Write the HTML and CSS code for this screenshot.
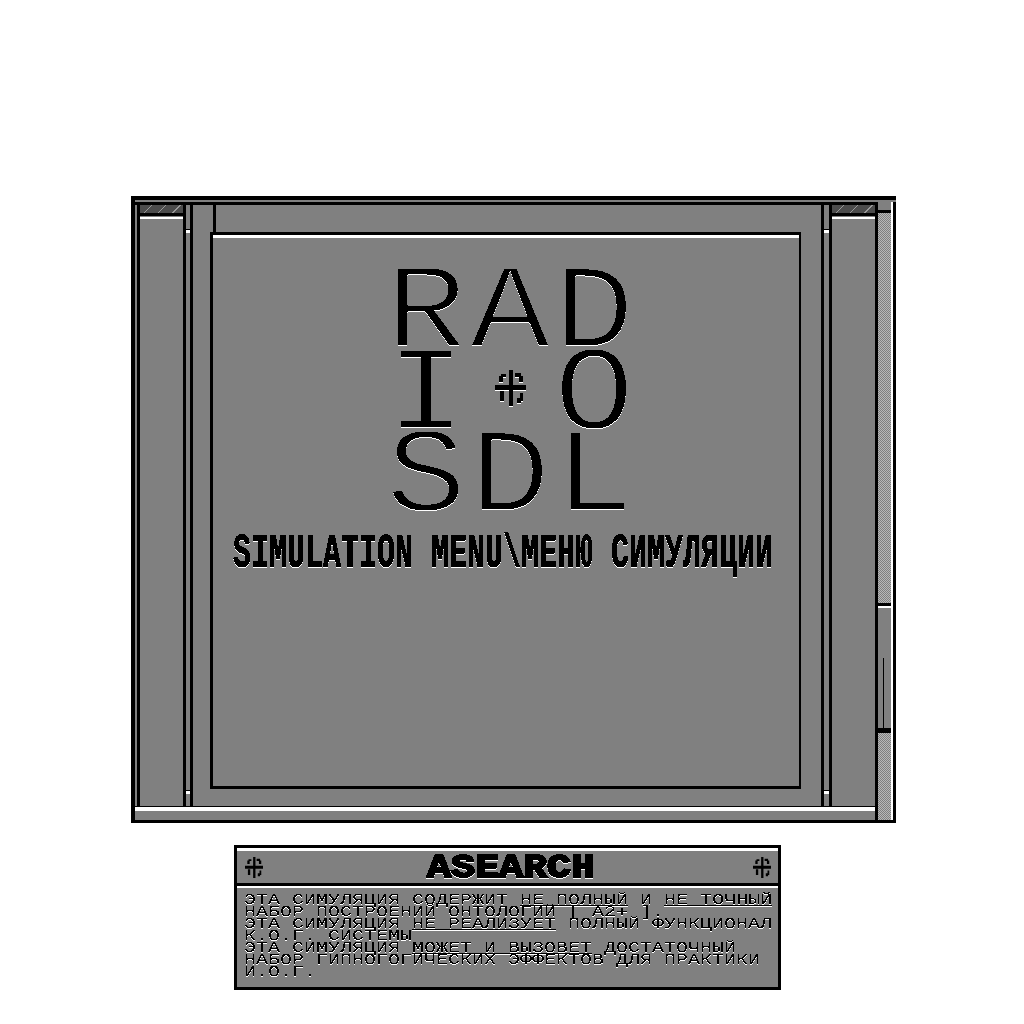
FILE: index.html
```html
<!DOCTYPE html>
<html lang="ru">
<head>
    <meta charset="UTF-8">
    <meta name="viewport" content="width=device-width, initial-scale=1.0">
    <title>Radio SDL</title>
    <link rel="stylesheet" href="styles.css">
</head>
<body>
    <svg class="defs" aria-hidden="true">
        <!-- hard 1-bit edges on text, with the white lip under each stroke -->
        <filter id="crisp" x="0" y="0" width="100%" height="100%" color-interpolation-filters="sRGB">
            <feComponentTransfer in="SourceAlpha" result="hard">
                <feFuncA type="discrete" tableValues="0 1"/>
            </feComponentTransfer>
            <feOffset in="hard" dy="1" result="moved"/>
            <feFlood flood-color="#fff"/>
            <feComposite in2="moved" operator="in" result="light"/>
            <feMerge>
                <feMergeNode in="light"/>
                <feMergeNode in="hard"/>
            </feMerge>
        </filter>
        <!-- same, but the gray text-stroke counts as empty, so letters come out thin -->
        <filter id="crisp-thin" x="0" y="0" width="100%" height="100%" color-interpolation-filters="sRGB">
            <feColorMatrix in="SourceGraphic" type="matrix" values="0 0 0 0 0  0 0 0 0 0  0 0 0 0 0  -2 0 0 1 0" result="dark"/>
            <feComponentTransfer in="dark" result="hard">
                <feFuncA type="discrete" tableValues="0 1"/>
            </feComponentTransfer>
            <feOffset in="hard" dy="1" result="moved"/>
            <feFlood flood-color="#fff"/>
            <feComposite in2="moved" operator="in" result="light"/>
            <feMerge>
                <feMergeNode in="light"/>
                <feMergeNode in="hard"/>
            </feMerge>
        </filter>
        <symbol id="dotcross" viewBox="0 0 31 36">
            <path d="M0 15h31v5H0zM14 0h4v36h-4zM4 6h2V4h5v3H8v5H4zM20 3h6v3h2v6h-4V7h-4zM5 21h4v10H5zM25 23h3v8h-2v2h-4v-5h3z"/>
        </symbol>
    </svg>

    <div class="window">
        <div class="main">
            <div class="columns">
                <div class="side side-left">
                    <div class="hatch"></div>
                    <div class="side-body"></div>
                </div>
                <div class="strip"><i></i><i></i></div>
                <div class="center">
                    <div class="center-top"></div>
                    <div class="panel">
                        <div class="logo">
                            <span>R</span><span>A</span><span>D</span>
                            <span>I</span>
                            <svg class="mark"><use href="#dotcross"/></svg>
                            <span>O</span>
                            <span>S</span><span>D</span><span>L</span>
                        </div>
                        <h1 class="subtitle"><span>SIMULATION MENU\МЕНЮ СИМУЛЯЦИИ</span></h1>
                    </div>
                </div>
                <div class="strip strip-right"><i></i><i></i></div>
                <div class="side side-right">
                    <div class="hatch"></div>
                    <div class="side-body"></div>
                </div>
            </div>
            <div class="bottom-bar"></div>
        </div>
        <div class="scroll">
            <div class="scroll-cap"></div>
            <div class="scroll-track scroll-track-top"></div>
            <div class="scroll-thumb"><i></i></div>
            <div class="scroll-track"></div>
        </div>
    </div>

    <div class="info">
        <div class="info-head">
            <svg class="mark-small"><use href="#dotcross"/></svg>
            <h2 class="info-title"><span>ASEARCH</span></h2>
            <svg class="mark-small"><use href="#dotcross"/></svg>
        </div>
        <div class="info-body">
            <div class="notes">
                <p>ЭТА СИМУЛЯЦИЯ СОДЕРЖИТ <u>НЕ ПОЛНЫЙ</u> И <u>НЕ ТОЧНЫЙ</u></p>
                <p>НАБОР ПОСТРОЕНИЙ ОНТОЛОГИЙ [ A2+ ].</p>
                <p>ЭТА СИМУЛЯЦИЯ <u>НЕ РЕАЛИЗУЕТ</u> ПОЛНЫЙ ФУНКЦИОНАЛ</p>
                <p>К.О.Г. СИСТЕМЫ</p>
                <p>ЭТА СИМУЛЯЦИЯ <u>МОЖЕТ И ВЫЗОВЕТ</u> ДОСТАТОЧНЫЙ</p>
                <p>НАБОР ГИПНОГОГИЧЕСКИХ ЭФФЕКТОВ ДЛЯ ПРАКТИКИ</p>
                <p>И.О.Г.</p>
            </div>
        </div>
    </div>
</body>
</html>
```

FILE: styles.css
```css
*{
    margin: 0;
    padding: 0;
    box-sizing: border-box;
}
body{
    background: #fff;
    padding: 196px 0 0 131px;
    font-family: "Liberation Mono", monospace;
    color: #000;
}
.defs{
    position: absolute;
    width: 0;
    height: 0;
}

/* main window */
.window{
    display: flex;
    width: 765px;
    height: 627px;
    background: #808080;
    border: solid #000;
    border-width: 4px 0 3px 4px;
}
.main{
    flex: 1;
    display: flex;
    flex-direction: column;
    padding-top: 2px;
}
.columns{
    flex: 1;
    display: flex;
    border-top: 3px solid #000;
}
.side{
    display: flex;
    flex-direction: column;
    border-right: 3px solid #000;
}
.side-left{
    width: 49px;
    border-left: 3px solid #000;
    margin-left: 2px;
}
.side-right{
    width: 46px;
    border-left: 3px solid #000;
    border-right: 0;
}
.hatch{
    height: 11px;
    border-bottom: 3px solid #000;
    background: repeating-linear-gradient(135deg, #4c4c4c 0 8px, #999 8px 9px, #4c4c4c 9px 10px);
}
.side-body{
    flex: 1;
    margin-top: 1px;
    border-top: 2px solid #fff;
}
.strip{
    display: flex;
    flex-direction: column;
    justify-content: space-between;
    width: 4px;
    padding: 25px 0 12px;
}
.strip-right{
    width: 5px;
}
.strip i{
    display: block;
    height: 3px;
    background: #fff;
    box-shadow: 0 -1px #000;
}
.center{
    flex: 1;
    display: flex;
    flex-direction: column;
    border-left: 3px solid #000;
    border-right: 3px solid #000;
    padding: 0 20px 0 17px;
}
.center-top{
    height: 27px;
    margin-left: 3px;
    border-left: 3px solid #000;
}
.panel{
    display: flex;
    flex-direction: column;
    align-items: center;
    height: 557px;
    border: solid #000;
    border-width: 3px 2px 3px 3px;
    box-shadow: inset 0 3px #fff;
    padding-top: 39px;
}

/* logo, 3x3 letters */
.logo{
    display: grid;
    grid-template-columns: repeat(3, 84px);
    grid-auto-rows: 82px;
    justify-items: center;
    align-items: center;
    margin-left: 8px;
    font-size: 120px;
    line-height: 82px;
    -webkit-text-stroke: 3px #808080;
    filter: url(#crisp-thin);
}
.logo span{
    transform: scaleX(1.12);
}
.mark{
    width: 31px;
    height: 36px;
    margin-bottom: 18px;
}
.mark-small{
    width: 18px;
    height: 21px;
}
.subtitle{
    width: 540px;
    height: 48px;
    margin-top: 10px;
    margin-right: 6px;
    font-size: 30px;
    font-weight: bold;
    line-height: 30px;
    white-space: nowrap;
    filter: url(#crisp);
}
.subtitle span{
    display: block;
    -webkit-text-stroke: 0.5px #000;
    transform: scaleY(1.6);
    transform-origin: left top;
}
.bottom-bar{
    height: 14px;
    border-top: 1px solid #000;
    box-shadow: inset 0 4px #fff;
}

/* scrollbar */
.scroll{
    display: flex;
    flex-direction: column;
    width: 21px;
    margin-top: 2px;
    border-left: 3px solid #000;
    border-right: 3px solid #000;
    box-shadow: inset -2px 0 #fff;
}
.scroll-cap{
    height: 11px;
    border-bottom: 3px solid #000;
    margin-right: 2px;
}
.scroll-track{
    flex: 1;
    margin-right: 2px;
    background: repeating-conic-gradient(#808080 0 25%, #b8b8b8 0 50%) 0 0 / 2px 2px;
}
.scroll-track-top{
    flex: none;
    height: 390px;
}
.scroll-thumb{
    height: 130px;
    margin-right: 2px;
    border-top: 3px solid #000;
    border-bottom: 5px solid #000;
    box-shadow: inset 0 2px #fff;
}
.scroll-thumb i{
    display: block;
    width: 1px;
    height: 70px;
    margin: 52px 0 0 5px;
    background: #000;
}

/* info box under the window */
.info{
    width: 547px;
    height: 145px;
    margin: 22px 0 0 103px;
    background: #808080;
    border: 3px solid #000;
}
.info-head{
    display: flex;
    align-items: center;
    justify-content: space-between;
    height: 38px;
    padding: 4px 7px 0 8px;
    border-bottom: 3px solid #000;
    box-shadow: inset 0 3px #fff;
}
.info-title{
    width: 170px;
    height: 30px;
    margin-left: 8px;
    font-size: 34px;
    font-weight: bold;
    line-height: 30px;
    -webkit-text-stroke: 2px #000;
    filter: url(#crisp);
}
.info-title span{
    display: block;
    transform: scaleX(1.176);
    transform-origin: left top;
}
.info-body{
    padding: 8px 0 0 7px;
    box-shadow: inset 0 2px #fff;
}
.notes{
    width: 530px;
    height: 90px;
    font-size: 14px;
    line-height: 12px;
    filter: url(#crisp);
}
.notes p{
    white-space: nowrap;
    transform: scaleX(1.4286);
    transform-origin: left top;
}
```
